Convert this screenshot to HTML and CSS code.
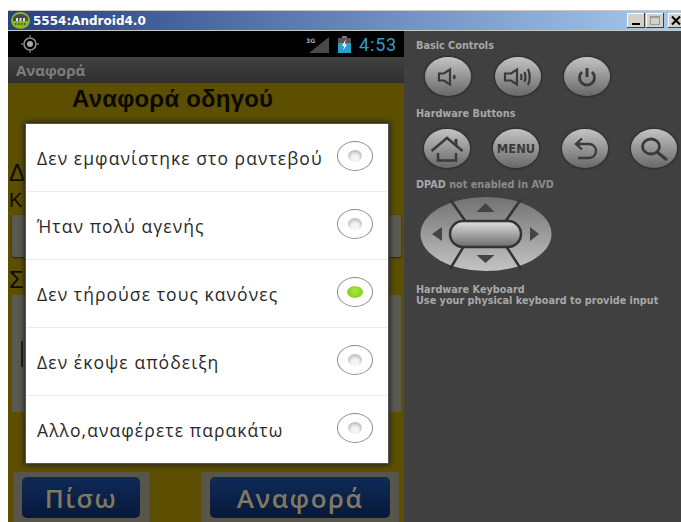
FILE: index.html
```html
<!DOCTYPE html>
<html lang="el">
<head>
<meta charset="utf-8">
<title>5554:Android4.0</title>
<link rel="stylesheet" href="styles.css">
</head>
<body>
<div class="window">
  <header class="titlebar">
    <svg class="app-icon" width="19" height="17" viewBox="0 0 19 17"><ellipse cx="9.500" cy="8.500" rx="9.500" ry="8.500" fill="#8db52a"/><path d="M2 7a7.500 5 0 0 1 15 0v2H2z" fill="#4a4a4a"/><rect x="5" y="6" width="2" height="3" fill="#ddd"/><rect x="8.500" y="6" width="2" height="3" fill="#ddd"/><rect x="12" y="6" width="2" height="3" fill="#ddd"/><path d="M4 12h11" stroke="#2e4a10" stroke-width="1.500" stroke-dasharray="1.500 1.500"/></svg>
    <span class="title">5554:Android4.0</span>
    <div class="controls">
      <span class="ctl"><svg width="18" height="15" viewBox="0 0 18 15"><rect x="5" y="10" width="8" height="2" fill="#000"/></svg></span>
      <span class="ctl"><svg width="18" height="15" viewBox="0 0 18 15"><rect x="4.500" y="3.500" width="9" height="8" fill="none" stroke="#9a9a9a"/><rect x="4" y="3" width="10" height="2" fill="#9a9a9a"/></svg></span>
      <span class="ctl close"><svg width="18" height="15" viewBox="0 0 18 15"><path d="M4 3.500l8 8M12 3.500l-8 8" stroke="#000" stroke-width="2"/></svg></span>
    </div>
  </header>

  <div class="body">
    <section class="phone">
      <div class="statusbar">
        <svg class="gps" width="20" height="20" viewBox="0 0 20 20"><circle cx="10" cy="10" r="6" fill="none" stroke="#8f8f8f" stroke-width="1.600"/><circle cx="10" cy="10" r="3" fill="#a8a8a8"/><path d="M10 1v3M10 16v3M1 10h3M16 10h3" stroke="#707070" stroke-width="1.500"/></svg>
        <div class="status-right">
          <svg class="signal" width="24" height="17" viewBox="0 0 24 17"><path d="M23 1v16H3z" fill="#4a4a4a"/><text x="0" y="7" class="net">3G</text></svg>
          <svg class="battery" width="13" height="17" viewBox="0 0 13 17"><rect x="4" y="0" width="5" height="2" fill="#777"/><rect x="0" y="2" width="13" height="6" fill="#555"/><rect x="0" y="7" width="13" height="10" fill="#2c9ccb"/><path d="M8 3L4 10h2.500L5 14.500l4-6H6.500z" fill="#fff"/></svg>
          <span class="clock">4:53</span>
        </div>
      </div>
      <div class="appbar"><span>Αναφορά</span></div>
      <main class="screen">
        <h1 class="heading">Αναφορά οδηγού</h1>
        <p class="under-d">Δ</p>
        <p class="under-k">Κ</p>
        <div class="under-field first"></div>
        <p class="under-s">Σ</p>
        <div class="under-field second"><i class="caret"></i></div>
        <div class="actions">
          <div class="btn-wrap narrow"><button class="btn">Πίσω</button></div>
          <div class="btn-wrap wide"><button class="btn">Αναφορά</button></div>
        </div>
      </main>
      <ul class="dialog">
        <li class="option"><span>Δεν εμφανίστηκε στο ραντεβού</span><i class="radio"></i></li>
        <li class="option"><span>Ήταν πολύ αγενής</span><i class="radio"></i></li>
        <li class="option"><span>Δεν τήρούσε τους κανόνες</span><i class="radio on"></i></li>
        <li class="option"><span>Δεν έκοψε απόδειξη</span><i class="radio"></i></li>
        <li class="option"><span>Αλλο,αναφέρετε παρακάτω</span><i class="radio"></i></li>
      </ul>
    </section>

    <aside class="panel">
      <h2 class="label">Basic Controls</h2>
      <div class="keys basic">
        <div class="key"><svg width="22" height="20" viewBox="0 0 22 20"><path d="M2 6.500h5l6-4v15l-6-4H2z" fill="none" stroke="#3a3a3a" stroke-width="2.200"/><path d="M17 8q1 2 0 4" fill="none" stroke="#3a3a3a" stroke-width="2.500"/></svg></div>
        <div class="key"><svg width="30" height="22" viewBox="0 0 30 22"><path d="M2 7.500h6l6-4v15l-6-4H2z" fill="none" stroke="#3a3a3a" stroke-width="2.200"/><path d="M18 8q1 3 0 6M21.500 6q2 5 0 10M25 3q3.500 8 0 16" fill="none" stroke="#3a3a3a" stroke-width="2.200"/></svg></div>
        <div class="key"><svg width="20" height="20" viewBox="0 0 20 20"><path d="M5 5a7.500 7.500 0 1 0 10 0" fill="none" stroke="#3a3a3a" stroke-width="2.800"/><path d="M10 1v9" stroke="#3a3a3a" stroke-width="3"/></svg></div>
      </div>
      <h2 class="label second-label">Hardware Buttons</h2>
      <div class="keys hardware">
        <div class="key"><svg width="34" height="26" viewBox="0 0 34 26"><path d="M1.500 15L17 2l15.500 13" fill="none" stroke="#3a3a3a" stroke-width="2.500"/><path d="M8 17v7.500h18V17" fill="none" stroke="#3a3a3a" stroke-width="2.500"/><path d="M26 3v7" stroke="#3a3a3a" stroke-width="3"/></svg></div>
        <div class="key"><span class="menu">MENU</span></div>
        <div class="key"><svg width="25" height="23" viewBox="0 0 25 23"><path d="M9 1.500L3 7l6 5.500M3 7h13a7 7 0 0 1 0 14H5" fill="none" stroke="#3a3a3a" stroke-width="2.300"/></svg></div>
        <div class="key"><svg width="28" height="24" viewBox="0 0 28 24"><ellipse cx="11" cy="9.500" rx="8.500" ry="7.500" fill="none" stroke="#3a3a3a" stroke-width="2.800"/><path d="M17 15l10 8" stroke="#3a3a3a" stroke-width="3.200"/></svg></div>
      </div>
      <h2 class="label dpad-label">DPAD <span class="dim">not enabled in AVD</span></h2>
      <div class="dpad">
        <svg width="132" height="76" viewBox="0 0 132 76">
          <defs>
            <linearGradient id="pad" x1="0" y1="0" x2="0" y2="1"><stop offset="0" stop-color="#727272"/><stop offset="1" stop-color="#c4c4c4"/></linearGradient>
            <linearGradient id="centre" x1="0" y1="0" x2="0" y2="1"><stop offset="0" stop-color="#e0e0e0"/><stop offset="1" stop-color="#6c6c6c"/></linearGradient>
          </defs>
          <ellipse cx="66" cy="38" rx="65.500" ry="37" fill="url(#pad)"/>
          <path d="M30 3L46 26M101 3L85 26M30 73L44 50M101 73L86 50" stroke="#333" stroke-width="2.500"/>
          <rect x="30" y="25" width="71" height="26" rx="13" fill="url(#centre)" stroke="#333" stroke-width="2.500"/>
          <path d="M65.500 7l9 9h-18zM65.500 67l-9-8h18zM12 38l10-7v14zM119 38l-9-7v14z" fill="#444"/>
        </svg>
      </div>
      <p class="label keyboard">Hardware Keyboard<br>Use your physical keyboard to provide input</p>
    </aside>
  </div>
</div>
</body>
</html>
```
FILE: styles.css
```css
* { box-sizing: border-box; }
html, body { margin: 0; height: 100%; background: #fff; overflow: hidden; }
body { padding: 10px 0 0 8px; font-family: "Open Sans", "Liberation Sans", sans-serif; }

.window { width: 673px; height: 512px; display: flex; flex-direction: column; }

.titlebar {
  height: 21px; display: flex; align-items: center; gap: 3px; padding: 0 0 0 3px;
  border-top: 1px solid #c8c8c8; border-bottom: 1px solid #c8c8c8;
  background: linear-gradient(90deg, #254181, #a6caf0);
}
.app-icon { flex: none; }
.title { color: #fff; font: bold 12px "DejaVu Sans", sans-serif; }
.controls { margin-left: auto; margin-right: -5px; display: flex; gap: 1px; flex: none; }
.ctl {
  width: 18px; height: 15px; background: #d4d0c8; display: block;
  box-shadow: inset -1px -1px #404040, inset 1px 1px #fff;
}
.ctl.close { margin-left: 3px; }
.ctl svg { display: block; }

.body { flex: 1; display: flex; min-height: 0; }

.phone { position: relative; width: 396px; flex: none; display: flex; flex-direction: column; background: #000; }
.statusbar { height: 26px; background: #000; display: flex; align-items: center; justify-content: space-between; padding: 0 7px 0 12px; }
.status-right { display: flex; align-items: center; gap: 8px; }
.net { font: bold 6px "DejaVu Sans", sans-serif; fill: #aaa; }
.clock { color: #2f9cc6; font: 18px Roboto, sans-serif; letter-spacing: .8px; }
.appbar {
  height: 26px; padding: 0 8px; display: flex; align-items: center;
  background: linear-gradient(#404040, #2f2f2f);
  color: #7d7d7d; font: bold 15px "Open Sans", sans-serif;
}

.screen { flex: 1; position: relative; background: #5c4f02; }
.heading { margin: 0; padding-left: 64px; font: bold 24px/32px "Liberation Sans", sans-serif; letter-spacing: .2px; color: #0b0900; }
.under-d, .under-k, .under-s { position: absolute; left: 1px; margin: 0; color: #0c0c00; font: 24px/22px "Liberation Sans", sans-serif; }
.under-d { top: 79px; }
.under-k { top: 109px; font-size: 20px; line-height: 16px; }
.under-s { top: 186px; }
.under-field { position: absolute; left: 4px; right: 3px; background: #5a5a52; border-radius: 2px; }
.under-field.first { top: 132px; height: 42px; box-shadow: 0 1px 2px #222; }
.under-field.second { top: 212px; height: 117px; }
.caret { position: absolute; left: 9px; top: 46px; width: 2px; height: 26px; background: #1a1a1a; }

.actions { position: absolute; left: 5px; right: 5px; top: 389px; display: flex; justify-content: space-between; }
.btn-wrap { background: #58564a; padding: 5px 9px; height: 50px; }
.btn-wrap.narrow { width: 136px; }
.btn-wrap.wide { width: 198px; }
.btn {
  display: block; width: 100%; height: 41px; border: 0; border-radius: 5px; padding: 0;
  background: linear-gradient(#0f2a58, #07183a);
  color: #7a7a6e; font: 600 26px "Open Sans", sans-serif; letter-spacing: 1.500px; text-shadow: 1px 1px #1c1c1c;
}

.dialog {
  position: absolute; left: 17px; top: 92px; width: 364px; height: 341px;
  margin: 0; padding: 0; list-style: none; background: #fff;
  border: 1px solid #555; box-shadow: 0 0 5px 1px #222;
  display: flex; flex-direction: column;
}
.option {
  flex: 1; display: flex; align-items: center; justify-content: space-between;
  padding: 0 15px 0 11px; border-bottom: 1px solid #ececec;
  color: #2a2a2a; font: 17.500px "Open Sans", sans-serif; letter-spacing: 1.070px; white-space: nowrap;
}
.option:last-child { border-bottom: 0; }
.radio {
  flex: none; width: 36px; height: 30px; border-radius: 50%; margin-top: -3px;
  border: 1px solid #8a8a8a; background: #fff; position: relative;
}
.radio::after {
  content: ""; position: absolute; left: 10px; top: 8px; width: 14px; height: 12px; border-radius: 50%;
  background: radial-gradient(circle at 50% 70%, #f4f4f4 30%, #9c9c9c);
}
.radio.on::after { background: radial-gradient(circle at 50% 40%, #a6e83a, #7cc61a); width: 16px; left: 9px; }

.panel { flex: 1; background: #404040; padding: 9px 0 0 12px; min-width: 0; }
.label { margin: 0; font: bold 9.700px/11px "DejaVu Sans", sans-serif; color: #a8a8a8; white-space: nowrap; }
.dim { color: #8c8c8c; }
.keys { display: flex; }
.keys.basic { gap: 23.500px; padding-left: 9px; margin-top: 6px; }
.keys.hardware { gap: 23px; padding-left: 8px; margin-top: 10px; }
.key {
  flex: none; width: 46px; height: 39px; border-radius: 50%;
  display: flex; align-items: center; justify-content: center;
  background: linear-gradient(#c4c4c4, #686868);
  box-shadow: 0 0 2px 1px #2a2a2a;
}
.key svg { display: block; }
.menu { font: bold 11.500px "DejaVu Sans", sans-serif; color: #3a3a3a; }
.second-label { margin-top: 12px; }
.dpad-label { margin-top: 11px; }
.dpad { margin: 6px 0 0 4px; }
.dpad svg { display: block; }
.keyboard { margin-top: 12px; }
```
